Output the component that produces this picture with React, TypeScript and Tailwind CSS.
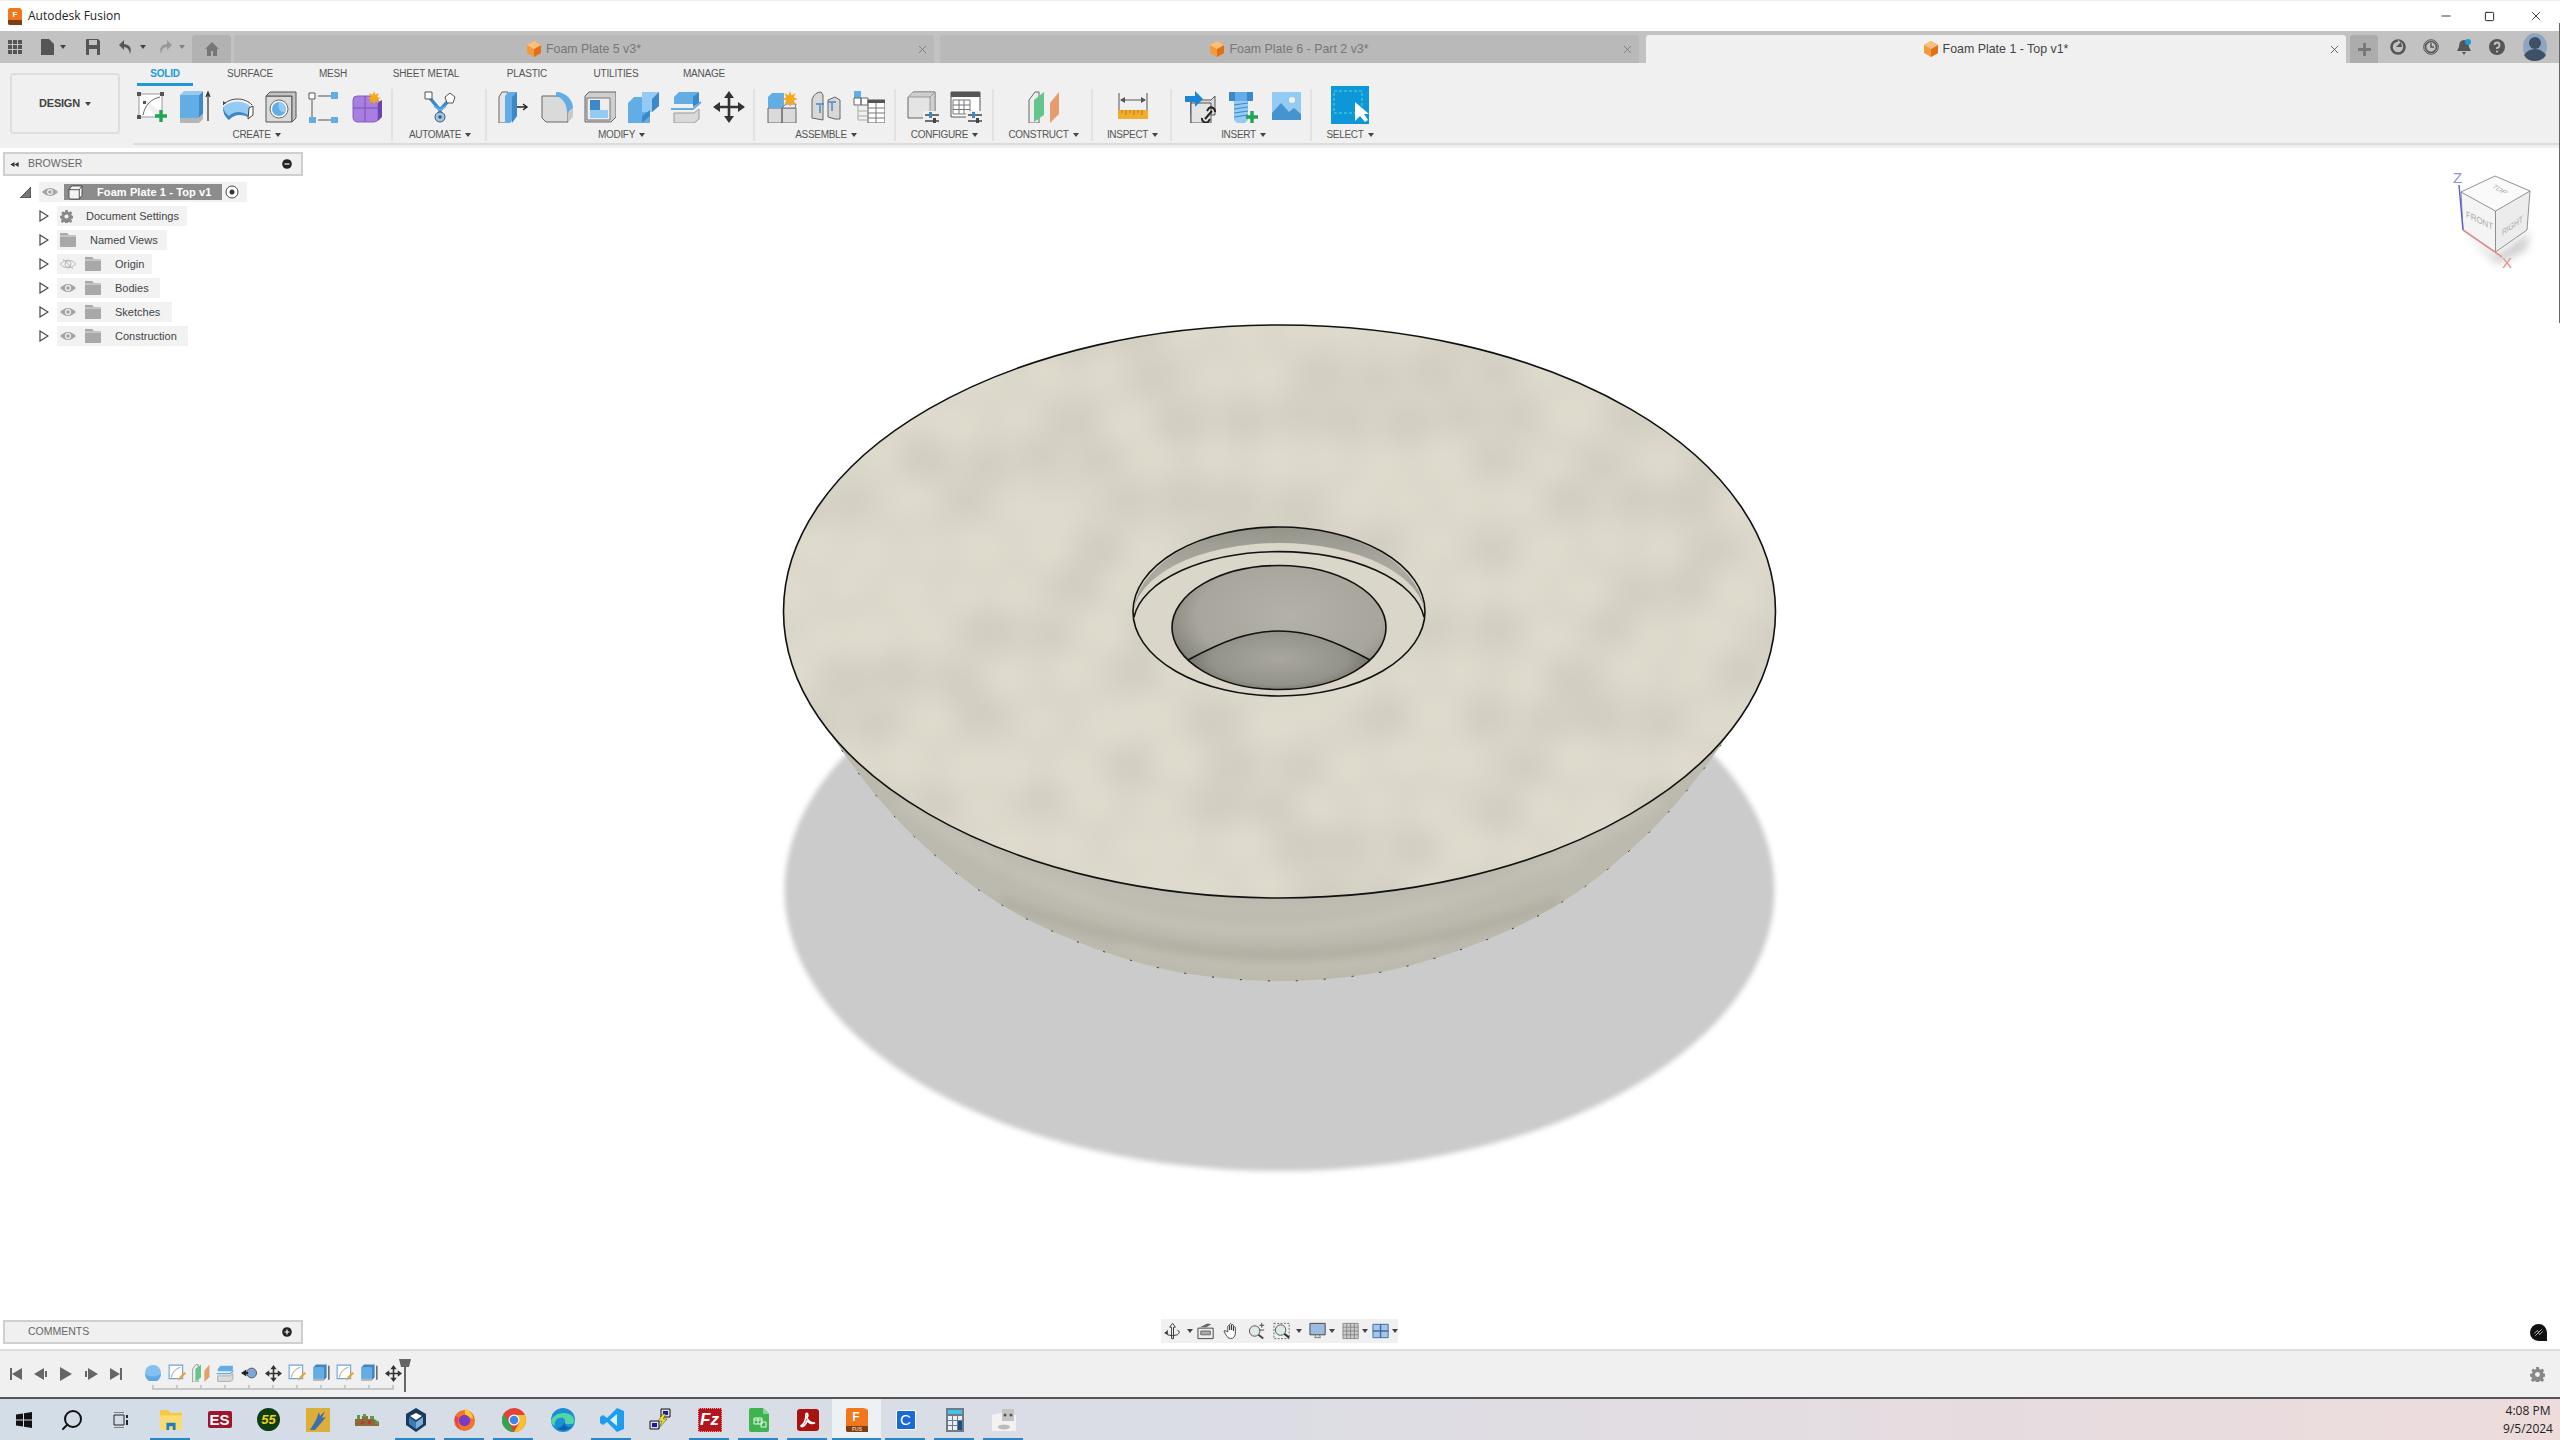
import { ReactNode } from "react";
import { Minus, Search, Square, X } from "lucide-react";

const BLUE = "#62ade6";
const BLUE_D = "#3c88c9";
const BLUE_L = "#93cbf5";
const GREY = "#dadada";
const GREY_D = "#b5b5b5";

const Ico = ({ children, className = "size-8" }: { children: ReactNode; className?: string }) => (
  <svg viewBox="0 0 32 32" className={`${className} shrink-0`}>
    {children}
  </svg>
);

const Caret = ({ className = "" }: { className?: string }) => (
  <svg viewBox="0 0 6 4" className={`w-[6px] h-[4px] shrink-0 ${className}`}>
    <path d="M0 0h6L3 4z" fill="#444" />
  </svg>
);

const Plus = ({ x, y, s = 6 }: { x: number; y: number; s?: number }) => (
  <path d={`M${x - s} ${y}h${2 * s}M${x} ${y - s}v${2 * s}`} stroke="#22a455" strokeWidth="3.4" />
);

const Star = ({ x, y, r = 7 }: { x: number; y: number; r?: number }) => {
  const pts: string[] = [];
  for (let i = 0; i < 16; i++) {
    const a = (i * Math.PI) / 8;
    const d = i % 2 ? r * 0.5 : r;
    pts.push(`${x + Math.cos(a) * d},${y + Math.sin(a) * d}`);
  }
  return <polygon points={pts.join(" ")} fill="#f5a81c" />;
};

const SketchIcon = () => (
  <Ico>
    <path d="M3 3h23v19M3 3v23h17" fill="#fff" stroke="#999" strokeWidth="1" />
    <path d="M7 24C9 14 15 8 24 6" fill="none" stroke="#666" strokeWidth="1" />
    <path d="M1 1h4v4H1zM24 1h4v4h-4zM1 24h4v4H1zM7 10h3v3H7z" fill="#555" />
    <Plus x={25} y={25} />
  </Ico>
);

const ExtrudeIcon = () => (
  <Ico>
    <path d="M1 4h19v23H1z" fill={BLUE} />
    <path d="M20 4l4-4v23l-4 4z" fill={BLUE_D} />
    <path d="M1 4l4-4h19l-4 4z" fill={BLUE_L} />
    <path d="M1 27h19l4-4v5l-4 4H1z" fill={GREY_D} />
    <path d="M29 30V2M27 6l2-5 2 5" fill="none" stroke="#333" strokeWidth="1.2" />
  </Ico>
);

const RevolveIcon = () => (
  <Ico>
    <path d="M1 14C8 6 23 6 30 14" fill="none" stroke="#444" strokeWidth="1" />
    <path d="M1 14l0-4 3 2z" fill="#444" />
    <path d="M1 16C9 9 22 9 29 16l-3 8C20 20 12 20 7 27 3 26 1 22 1 16z" fill={BLUE_L} />
    <path d="M1 16c0 7 3 11 6 13 5-6 13-6 19-3v-2C20 20 12 20 7 25 4 23 2 20 1 16z" fill={BLUE_D} />
    <path d="M27 17l4-2v9l-5 4z" fill="#fff" stroke="#444" />
  </Ico>
);

const HoleIcon = () => (
  <Ico>
    <path d="M1 5h26v26H1z" fill={GREY} stroke="#555" />
    <path d="M1 5l4-4h26v26l-4 4V5z" fill="#c4c4c4" stroke="#555" />
    <circle cx="14" cy="18" r="9" fill="#fff" stroke="#666" />
    <circle cx="14" cy="18" r="7" fill={BLUE} />
    <path d="M14 11a7 7 0 0 1 6 10c-4 1-8-3-6-10z" fill={BLUE_L} />
  </Ico>
);

const NodesIcon = () => (
  <Ico>
    <path d="M10 5h13M4 9v17M10 29h13" stroke="#555" strokeWidth="1" />
    <path d="M1 2h6v6H1z" fill="#fff" stroke="#555" />
    <path d="M23 1h7v7h-7zM1 26h7v7H1zM23 26h7v7h-7z" fill={BLUE} />
  </Ico>
);

const FormIcon = () => (
  <Ico>
    <path d="M2 9q0-4 4-4h17q4 0 4 4v18q0 4-4 4H7q-5 0-5-5z" fill="#a87fe0" stroke="#8a5cc8" />
    <path d="M2 17h25M14 5v26" stroke="#7c4fbb" />
    <path d="M27 11l4-2v17l-4 4z" fill="#6d44ad" />
    <Star x={23} y={7} />
  </Ico>
);

const AutomateIcon = () => (
  <Ico>
    <path d="M5 6l11 13 11-12M16 19v5" fill="none" stroke={BLUE_D} strokeWidth="3.4" />
    <path d="M10 15l6 4 6-4" fill="none" stroke={BLUE} strokeWidth="2" />
    <path d="M1 1h7v7H1z" fill="#fff" stroke="#555" />
    <path d="M26 2l5 4-2 6h-6l-2-6z" fill="#fff" stroke="#555" />
    <circle cx="16" cy="26" r="5" fill={BLUE_L} stroke="#555" />
    <circle cx="16" cy="26" r="1.8" fill="#555" />
  </Ico>
);

const PressPull = () => (
  <Ico>
    <path d="M1 6l3-5h6v31H1z" fill="#e6e6e6" stroke="#666" />
    <path d="M7 32V5l3-4h9v24l-7 7z" fill={BLUE} />
    <path d="M14 32V6l5-5v24z" fill={BLUE_D} />
    <path d="M19 16h9M25 13l4 3-4 3" fill="none" stroke="#222" strokeWidth="1.4" />
  </Ico>
);

const FilletIcon = () => (
  <Ico>
    <path d="M1 5h15c7 0 11 6 11 13v13H5l-4-4z" fill={GREY} stroke="#666" />
    <path d="M15 1C25 1 32 9 32 17l-6 5C26 13 22 7 15 5z" fill={BLUE} />
    <path d="M27 22l5-5v9l-5 5z" fill="#c8c8c8" />
  </Ico>
);

const ChamferIcon = () => (
  <Ico>
    <path d="M1 5l4-4h27v25l-5 5H1z" fill="#cfcfcf" stroke="#666" />
    <path d="M3 7h23v22H3z" fill="#eee" stroke="#777" />
    <path d="M6 9h10v10h8v8H6z" fill={BLUE_L} />
    <path d="M6 9h10v10H6z" fill={BLUE_D} />
  </Ico>
);

const CombineIcon = () => (
  <Ico>
    <path d="M1 12l6-6h8v13h8v13H1z" fill={BLUE} />
    <path d="M15 1h17v14l-7 6H15z" fill={BLUE_L} />
    <path d="M25 8l7-7v14l-7 6z" fill={BLUE_D} />
    <path d="M15 32l8-7v-6l-8 6z" fill={BLUE_D} />
  </Ico>
);

const OffsetIcon = () => (
  <Ico>
    <path d="M4 6l5-5h19v12H4z" fill={BLUE} />
    <path d="M23 6l6-5v11l-6 4z" fill={BLUE_D} />
    <path d="M1 18h22l8-7" fill="none" stroke={BLUE} strokeWidth="1.8" />
    <path d="M4 22h20l5-4v10l-5 4H4z" fill={GREY} stroke="#999" />
  </Ico>
);

const MoveIcon = () => (
  <Ico>
    <path d="M16 5v22M5 16h22" stroke="#333" strokeWidth="2.6" />
    <path d="M16 0l5 7H11zM16 32l-5-7h10zM0 16l7-5v10zM32 16l-7 5V11z" fill="#333" />
  </Ico>
);

const NewComp = () => (
  <Ico>
    <path d="M1 17h14v15H1zM15 17h14v15H15z" fill={GREY} stroke="#666" />
    <path d="M1 6l4-4h12v15H1z" fill={BLUE} />
    <path d="M15 17l4-4h10l-1 4z" fill="#eee" stroke="#777" />
    <Star x={23} y={8} r={8} />
  </Ico>
);

const JointIcon = () => (
  <Ico>
    <path d="M2 27V8q3-7 9-7l2 3v25z" fill="#d8d8d8" stroke="#666" />
    <path d="M30 28V9l-5-3-7 3v17l7 2z" fill="#d8d8d8" stroke="#666" />
    <path d="M10 22v-8M22 20v-8M6 13h8M18 11h8" stroke={BLUE_D} strokeWidth="1.4" />
  </Ico>
);

const BomIcon = () => (
  <Ico>
    <path d="M1 0h7v7H1z" fill={BLUE} />
    <path d="M1 7h7v7H1zM8 7h7v7H8z" fill="#fff" stroke="#666" />
    <path d="M5 14v15h9M5 20h9M5 25h9" fill="none" stroke="#aaa" />
    <path d="M15 9h17v23H15z" fill="#fff" stroke="#555" />
    <path d="M15 9h17v3H15z" fill="#555" />
    <path d="M15 17h17M15 22h17M15 27h17M23 12v20" stroke="#777" />
  </Ico>
);

const Sliders = () => (
  <g>
    <path d="M18 24h14M18 30h14" stroke="#444" strokeWidth="1.6" />
    <path d="M22 21h3v6h-3z" fill={BLUE_D} />
    <path d="M26 27h3v5h-3z" fill="#444" />
  </g>
);

const ConfigCube = () => (
  <Ico>
    <path d="M1 6l5-5h22v21l-4 5H1z" fill="#e4e4e4" stroke="#666" />
    <path d="M23 6l5-5v21l-5 5zM1 6l5-5h22l-5 5z" fill="#cfcfcf" stroke="#999" />
    <rect x="16" y="20" width="16" height="12" fill="#f0f0f0" />
    <Sliders />
  </Ico>
);

const ConfigTable = () => (
  <Ico>
    <path d="M1 1h29v25H1z" fill="#fff" stroke="#555" />
    <path d="M1 1h29v5H1z" fill="#555" />
    <path d="M3 9h17v14H3zM3 14h17M3 18.500h17M9 9v14M14 9v14" fill="none" stroke="#777" />
    <rect x="16" y="20" width="16" height="12" fill="#f0f0f0" />
    <Sliders />
  </Ico>
);

const ConstructGlyph = () => (
  <>
    <path d="M1 9l6-8h4v31H1z" fill="#eee" stroke="#666" />
    <path d="M6 31V9l10-8v23z" fill="#62c58a" />
    <path d="M22 32V12l9-11v22z" fill="#e79c6d" />
  </>
);

const ConstructIcon = () => (
  <Ico>
    <ConstructGlyph />
  </Ico>
);

const InspectIcon = () => (
  <Ico>
    <path d="M2 2v17M30 2v17M4 9h24" stroke="#555" />
    <path d="M3 9l5-3v6zM29 9l-5-3v6z" fill="#555" />
    <path d="M1 19h30v9H1z" fill="#f2ad2e" />
    <path d="M5 19v3M9 19v5M13 19v3M17 19v5M21 19v3M25 19v5" stroke="#a87314" />
  </Ico>
);

const DeriveIcon = () => (
  <Ico>
    <path d="M6 9h20l4-4v19H6z" fill="#dcdcdc" stroke="#555" />
    <path d="M6 9v23h16" fill="none" stroke="#555" />
    <path d="M6 12h20v20H6z" fill="#e4e4e4" stroke="#555" />
    <path d="M0 5h10V0l8 8-8 8v-5H0z" fill="#1b86d6" />
    <path d="M20 28l7-8M17 27a4 4 0 0 0 6 4l2-3M30 21a4 4 0 0 0-6-4l-2 3" fill="none" stroke="#222" strokeWidth="2" />
  </Ico>
);

const BoltIcon = () => (
  <Ico>
    <path d="M1 1h24v9H1z" fill={BLUE_D} />
    <path d="M7 1h12v9H7z" fill={BLUE} />
    <path d="M6 10h14v19l-3 3H9l-3-3z" fill={BLUE_L} />
    <path d="M6 14l14-2M6 18l14-2M6 22l14-2M6 26l14-2" stroke={BLUE_D} />
    <Plus x={24} y={26} />
  </Ico>
);

const ImageIcon = () => (
  <Ico>
    <rect x="1" y="1" width="29" height="28" fill={BLUE_L} />
    <circle cx="21" cy="9" r="3" fill="#f4f1dc" />
    <path d="M1 22l9-10 8 9 5-4 7 6v6H1z" fill="#4593cf" />
  </Ico>
);

const SelectIcon = () => (
  <svg viewBox="0 0 38 38" className="w-[38px] h-[38px] shrink-0">
    <rect width="38" height="38" fill="#0d96d8" />
    <rect x="3" y="5" width="28" height="22" fill="none" stroke="#4fe0c8" strokeDasharray="3 2" />
    <path d="M24 16v19l5-5 5 6 3-2-4-6h5z" fill="#fff" />
  </svg>
);

const Group = ({ w, label, children, labelClass = "" }: { w: string; label: string; children: ReactNode; labelClass?: string }) => (
  <div className={`${w} relative flex flex-col items-center border-r-2 border-[#e2e2e2] h-[52px]`}>
    <div className="flex items-center gap-[11px] h-[34px] pt-[1px]">{children}</div>
    <div className={`flex items-center gap-[4px] mt-[6px] text-[10px] leading-3 tracking-[-0.3px] text-[#555] ${labelClass}`}>
      {label}
      <Caret />
    </div>
  </div>
);

const TabLabel = ({ w, children, active }: { w: string; children: string; active?: boolean }) => (
  <div
    className={`${w} h-[23px] pt-[5px] text-center text-[10px] leading-3 tracking-[-0.2px] ${
      active ? "text-[#1c9ad6] font-bold border-b-[3px] border-[#1c9ad6]" : "text-[#555]"
    }`}
  >
    {children}
  </div>
);

const TabCube = () => (
  <svg viewBox="0 0 14 16" className="w-[14px] h-[16px] shrink-0">
    <path d="M7 0l7 4v8l-7 4-7-4V4z" fill="#f39a3c" />
    <path d="M7 8l7-4v8l-7 4z" fill="#e0701a" />
    <path d="M7 0l7 4-7 4-7-4z" fill="#fbc07c" />
  </svg>
);

const DocTab = ({ w, text, active }: { w: string; text: string; active?: boolean }) => (
  <div
    className={`${w} relative h-[28px] rounded-t-[3px] flex items-center justify-center gap-[5px] text-[12.4px] leading-4 ${
      active ? "bg-[#f0f0f0] text-[#444]" : "bg-[#b9b9b9] text-[#777]"
    }`}
  >
    <TabCube />
    {text}
    <X className={`absolute right-[5px] top-[8px] size-[13px] ${active ? "text-[#555]" : "text-[#777]"}`} strokeWidth={1.6} />
  </div>
);

const Eye = ({ off }: { off?: boolean }) => (
  <svg viewBox="0 0 16 10" className="w-[16px] h-[10px] shrink-0">
    <path d="M0 5q8-8 16 0-8 8-16 0z" fill={off ? "none" : "#a5a5a5"} stroke={off ? "#bbb" : "none"} />
    <circle cx="8" cy="5" r="3" fill={off ? "none" : "#f2f2f2"} stroke={off ? "#bbb" : "none"} />
    {!off && <circle cx="8" cy="5" r="1.8" fill="#a5a5a5" />}
    {off && <path d="M3 0l10 10" stroke="#bbb" />}
  </svg>
);

const Folder = () => (
  <svg viewBox="0 0 16 14" className="w-[16px] h-[14px] shrink-0">
    <path d="M0 0h7l2 2h7v12H0z" fill="#a8a8a8" />
    <path d="M0 3h16" stroke="#e0e0e0" />
  </svg>
);

const Gear = ({ className, fill = "#888" }: { className: string; fill?: string }) => (
  <svg viewBox="0 0 16 16" className={`${className} shrink-0`}>
    <path
      d="M6.500 0h3l.4 2.200 1.300.6L13 1.500l2.100 2.100-1.300 1.900.6 1.300 2.200.4v3l-2.200.4-.6 1.300 1.300 1.900-2.100 2.100-1.800-1.300-1.300.6-.4 2.200h-3l-.4-2.200-1.300-.6L3 15.900.9 13.800l1.300-1.900-.6-1.300L0 10.200v-3l2.200-.4.6-1.300L1.500 3.600 3.600 1.500l1.600 1.300 1.300-.6z"
      fill={fill}
    />
    <circle cx="8" cy="8" r="2.600" fill="#f0f0f0" />
  </svg>
);

const Expand = () => (
  <svg viewBox="0 0 10 12" className="w-[10px] h-[12px] shrink-0">
    <path d="M1 1l8 5-8 5z" fill="#fff" stroke="#444" strokeWidth="1.2" />
  </svg>
);

const TreeRow = ({ w, children }: { w: string; children: ReactNode }) => (
  <div className="flex items-center h-[24px] pl-[39px]">
    <Expand />
    <div className={`${w} ml-[8px] h-[20px] bg-[#f2f2f2] flex items-center pl-[3px] text-[11px] leading-3 text-[#444]`}>
      {children}
    </div>
  </div>
);

const PanelHead = ({ title, plus, back }: { title: string; plus?: boolean; back?: boolean }) => (
  <div className="ml-[3px] w-[300px] h-[24px] bg-[#f0f0f0] border-2 border-[#cfcfcf] flex items-center text-[10.5px] text-[#666] relative pl-[23px]">
    {back && (
      <svg viewBox="0 0 10 6" className="absolute left-[5px] top-[8px] w-[9px] h-[5px]">
        <path d="M5 0v6L0 3zM10 0v6L5 3z" fill="#333" />
      </svg>
    )}
    {title}
    <svg viewBox="0 0 10 10" className="absolute right-[9px] top-[5px] size-[10px]">
      <circle cx="5" cy="5" r="4.800" fill="#222" />
      <path d={plus ? "M2.500 5h5M5 2.500v5" : "M2.500 5h5"} stroke="#fff" strokeWidth="1.2" />
    </svg>
  </div>
);

// seeded blobs for the foam texture
const rand = (i: number) => {
  const v = Math.sin(i * 91.17 + 3.3) * 43758.5453;
  return v - Math.floor(v);
};

const blobs: { x: number; y: number; r: number; light: boolean }[] = [];
for (let row = 0; row < 14; row++) {
  for (let col = 0; col < 19; col++) {
    const i = row * 19 + col;
    blobs.push({
      x: 784 + col * 56 + (row % 2) * 28 + rand(i) * 16,
      y: 325 + row * 43 + rand(i + 500) * 14,
      r: 19 + rand(i + 900) * 9,
      light: rand(i + 1300) > 0.35,
    });
  }
}

const BOWL =
  "M826 727Q880 810 937 857Q985 900 1043 927Q1110 958 1177 972Q1230 981 1279.500 981Q1329 981 1382 972Q1449 958 1516 927Q1574 900 1622 857Q1679 810 1733 727";

const Model = () => (
  <svg viewBox="0 148 2560 1201" className="absolute inset-0 w-full h-full">
    <defs>
      <filter id="soft" x="-5%" y="-5%" width="110%" height="110%">
        <feGaussianBlur stdDeviation="2.500" />
      </filter>
      <filter id="mottle" x="-5%" y="-5%" width="110%" height="110%">
        <feGaussianBlur stdDeviation="11" />
      </filter>
      <filter id="band" x="-5%" y="-20%" width="110%" height="140%">
        <feGaussianBlur stdDeviation="5" />
      </filter>
      <clipPath id="topFace">
        <ellipse cx="1279.500" cy="611.500" rx="496" ry="286.500" />
      </clipPath>
      <clipPath id="bowl">
        <path d={`${BOWL}Z`} />
      </clipPath>
      <linearGradient id="wall" x1="0" x2="0" y1="0" y2="1">
        <stop offset="0" stopColor="#96958c" />
        <stop offset="0.5" stopColor="#adaba1" />
        <stop offset="1" stopColor="#9a998f" />
      </linearGradient>
      <radialGradient id="bore" cx="0.55" cy="0.4" r="0.62">
        <stop offset="0" stopColor="#b4b2a8" />
        <stop offset="0.7" stopColor="#a8a69c" />
        <stop offset="1" stopColor="#7e7d75" />
      </radialGradient>
      <radialGradient id="pit" cx="0.5" cy="0.4" r="0.62">
        <stop offset="0" stopColor="#a9a79d" />
        <stop offset="0.6" stopColor="#94938a" />
        <stop offset="1" stopColor="#5a5954" />
      </radialGradient>
      <clipPath id="boreClip">
        <ellipse cx="1279" cy="627.500" rx="107" ry="62" />
      </clipPath>
    </defs>

    <ellipse cx="1279.500" cy="890" rx="495" ry="281" fill="#cbcbcb" filter="url(#soft)" />

    <path d={`${BOWL}Z`} fill="#bcbaae" />
    <g clipPath="url(#bowl)" filter="url(#band)">
      <path d="M900 800Q1250 1060 1660 800" fill="none" stroke="#c3c1b5" strokeWidth="12" />
      <path d="M1000 900Q1280 1010 1560 900" fill="none" stroke="#b1afa3" strokeWidth="12" />
      <path d="M1120 945Q1280 990 1440 945" fill="none" stroke="#c2c0b4" strokeWidth="7" />
      <path d="M1000 860Q1270 960 1580 860" fill="none" stroke="#c0beb2" strokeWidth="10" />
    </g>
    <path d={BOWL} fill="none" stroke="#333" strokeWidth="1" strokeDasharray="2 26" />

    <ellipse cx="1279.500" cy="611.500" rx="496" ry="286.500" fill="#d9d5c8" />
    <g clipPath="url(#topFace)">
      <g filter="url(#mottle)">
        {blobs.map((b, i) => (
          <ellipse key={i} cx={b.x} cy={b.y} rx={b.r} ry={b.r * 0.8} fill={b.light ? "#dfdbce" : "#d2cec1"} />
        ))}
      </g>
    </g>
    <ellipse cx="1279.500" cy="611.500" rx="496" ry="286.500" fill="none" stroke="#111" strokeWidth="1.6" />

    {/* counterbore */}
    <ellipse cx="1279" cy="611.500" rx="146" ry="84.500" fill="#dad6ca" />
    <path d="M1133 617A146 90 0 0 1 1425 617A146 74 0 0 0 1133 617Z" fill="url(#wall)" />
    <ellipse cx="1279" cy="611.500" rx="146" ry="84.500" fill="none" stroke="#111" strokeWidth="1.6" />
    <path d="M1134 617A146 74 0 0 1 1424 617" fill="none" stroke="#111" strokeWidth="1.6" />

    {/* through hole */}
    <ellipse cx="1279" cy="627.500" rx="107" ry="62" fill="url(#bore)" />
    <g clipPath="url(#boreClip)">
      <path d="M1188 660C1225 640 1250 631 1279 631C1308 631 1333 640 1370 660L1370 700L1188 700Z" fill="url(#pit)" stroke="#111" strokeWidth="1.6" />
    </g>
    <ellipse cx="1279" cy="627.500" rx="107" ry="62" fill="none" stroke="#111" strokeWidth="1.6" />
  </svg>
);

const NavCube = () => (
  <svg viewBox="2440 160 110 120" className="absolute right-[10px] top-[12px] w-[110px] h-[120px]">
    <defs>
      <filter id="cubeShadow" x="-30%" y="-30%" width="160%" height="160%">
        <feGaussianBlur stdDeviation="4" />
      </filter>
    </defs>
    <path d="M2464 232L2496 256L2530 232L2526 250L2497 264Z" fill="#999" opacity="0.5" filter="url(#cubeShadow)" />
    <path d="M2495 176L2530 191L2527 230L2495.500 252L2463 230L2461 192Z" fill="#f4f4f4" />
    <path d="M2495 176L2530 191L2495.500 211L2461 192Z" fill="#fafafa" />
    <path d="M2495.500 211L2530 191L2527 230L2495.500 252Z" fill="#ececec" />
    <path
      d="M2495 176L2530 191L2527 230L2495.500 252L2463 230L2461 192ZM2461 192L2495.500 211L2530 191M2495.500 211V252"
      fill="none"
      stroke="#777"
      strokeWidth="0.8"
    />
    <path d="M2463 230L2459 185" stroke="#5a5ae0" strokeWidth="1.4" />
    <path d="M2463 230L2502 257" stroke="#e09090" strokeWidth="1.6" />
    <text x="2453" y="183" fontSize="15" fill="#8f8fe8" fontFamily="Liberation Sans, sans-serif">Z</text>
    <text x="2502" y="268" fontSize="15" fill="#e88e8e" fontFamily="Liberation Sans, sans-serif">X</text>
    <g fontFamily="Liberation Sans, sans-serif" fontSize="9" fill="#a8a8a8">
      <text transform="matrix(0.87 0.42 0 1 2466 217)">FRONT</text>
      <text transform="matrix(0.75 -0.52 0 1 2502 236)">RIGHT</text>
      <text transform="matrix(0.72 0.4 -0.72 0.4 2491 187)">TOP</text>
    </g>
  </svg>
);

const NavBar = () => (
  <div className="absolute left-[1161px] bottom-[6px] w-[237px] h-[24px] bg-[#f0f0f0] flex items-center pl-[3px]">
    <svg viewBox="0 0 18 18" className="size-[18px]">
      <path d="M9 1l3 4h-2v12H8V5H6z" fill="#fff" stroke="#333" />
      <path d="M4 8q-4 3 0 5t10 0q4-3 0-5" fill="none" stroke="#333" />
      <path d="M0 11l4-2v4z" fill="#333" />
    </svg>
    <Caret className="ml-[6px]" />
    <svg viewBox="0 0 18 18" className="size-[18px] ml-[4px]">
      <path d="M1 6h16v11H1z" fill="#eee" stroke="#444" />
      <path d="M4 9h10v4H4z" fill="#aaa" stroke="#666" />
      <path d="M3 5l8-4 4 1-5 3z" fill="#666" />
    </svg>
    <svg viewBox="0 0 18 18" className="size-[18px] ml-[9px]">
      <path d="M5 10V4q1-2 2 0v4V2q1-2 2 0v6V3q1-2 2 0v6V5q1-1 2 0v7q-1 5-5 5-3 0-5-4L1 9q1-1 2 0z" fill="#fff" stroke="#333" strokeWidth="0.9" />
    </svg>
    <svg viewBox="0 0 18 18" className="size-[18px] ml-[8px]">
      <circle cx="7" cy="9" r="5.500" fill="#dcebe6" stroke="#555" />
      <path d="M11 13l5 4" stroke="#444" strokeWidth="2" />
      <path d="M12 3h5M14.500 .5v5M12 8h5" stroke="#444" />
    </svg>
    <svg viewBox="0 0 18 18" className="size-[18px] ml-[7px]">
      <path d="M1 1h16v16H1z" fill="none" stroke="#666" strokeDasharray="2 1.500" />
      <circle cx="8" cy="8" r="5.500" fill="#dcebe6" stroke="#555" />
      <path d="M12 12l5 4" stroke="#333" strokeWidth="2.200" />
    </svg>
    <Caret className="ml-[6px]" />
    <svg viewBox="0 0 18 18" className="size-[18px] ml-[7px]">
      <path d="M1 1h16v12H1z" fill="#9dbde0" stroke="#444" />
      <path d="M7 13h4l1 3H6z" fill="#ddd" stroke="#555" strokeWidth="0.7" />
    </svg>
    <Caret className="ml-[3px]" />
    <svg viewBox="0 0 18 18" className="size-[18px] ml-[7px]">
      <path d="M1 1h16v16H1zM1 5h16M1 9h16M1 13h16M5 1v16M9 1v16M13 1v16" fill="#ccc" stroke="#777" strokeWidth="0.8" />
    </svg>
    <Caret className="ml-[3px]" />
    <svg viewBox="0 0 18 18" className="size-[18px] ml-[4px]">
      <path d="M1 2h16v14H1z" fill="#a9c6e6" stroke="#3a6ea8" />
      <path d="M1 9h16M9 2v14" stroke="#3a6ea8" strokeWidth="1.500" />
    </svg>
    <Caret className="ml-[3px]" />
  </div>
);

const TlSketch = () => (
  <Ico className="size-[18px]">
    <path d="M2 2h24v24H2z" fill="#fff" stroke="#6ea4d6" strokeWidth="2" />
    <path d="M6 24C8 14 14 8 22 6" fill="none" stroke="#888" strokeWidth="1.500" />
    <path d="M18 30l3-8 8-8 3 3-8 8z" fill="#f0a030" />
  </Ico>
);

const TlSmall = ({ children }: { children: ReactNode }) => (
  <div className="w-[24px] flex flex-col items-center relative h-[30px]">
    <div className="h-[20px] flex items-center justify-center">{children}</div>
    <div className="w-[2px] h-[5px] bg-[#c8c8c8] mt-[2px]" />
  </div>
);

const tlExtrude = (
  <Ico className="size-[18px]">
    <path d="M2 6h19v23H2z" fill={BLUE} />
    <path d="M21 6l5-5v23l-5 5zM2 6l5-5h19l-5 5z" fill={BLUE_D} />
    <path d="M2 26h19v4H2z" fill={GREY_D} />
    <path d="M30 28V3" stroke="#333" strokeWidth="2" />
  </Ico>
);

const tlMove = (
  <Ico className="size-[17px]">
    <path d="M16 5v22M5 16h22" stroke="#333" strokeWidth="3" />
    <path d="M16 0l6 8H10zM16 32l-6-8h12zM0 16l8-6v12zM32 16l-8 6V10z" fill="#333" />
  </Ico>
);

const Timeline = () => (
  <div className="h-[50px] bg-[#f0f0f0] border-t-2 border-[#dedede] border-b-2 border-b-[#555] flex items-center shrink-0">
    <div className="flex items-center w-[141px] pl-[10px] gap-[12px] text-[#666]">
      <svg viewBox="0 0 12 12" className="size-[12px]"><path d="M0 0h2v12H0zM12 0v12L2 6z" fill="#666" /></svg>
      <svg viewBox="0 0 14 12" className="w-[14px] h-[12px]"><path d="M10 0v12L0 6zM11 3h2v6h-2z" fill="#666" /></svg>
      <svg viewBox="0 0 12 14" className="w-[12px] h-[14px]"><path d="M0 0l12 7-12 7z" fill="#666" /></svg>
      <svg viewBox="0 0 14 12" className="w-[14px] h-[12px]"><path d="M4 0v12l10-6zM1 3h2v6H1z" fill="#666" /></svg>
      <svg viewBox="0 0 12 12" className="size-[12px]"><path d="M10 0h2v12h-2zM0 0v12l10-6z" fill="#666" /></svg>
    </div>
    <div className="relative flex pt-[12px] h-[46px]">
      <div className="absolute left-[11px] top-[37px] w-[242px] h-[2px] bg-[#c8c8c8]" />
      <TlSmall>
        <svg viewBox="0 0 16 16" className="size-4"><circle cx="8" cy="8" r="8" fill="#85c0f0" /><path d="M0 9a8 8 0 0 0 16 0q-8 5-16 0z" fill="#62a8e0" /></svg>
      </TlSmall>
      <TlSmall><TlSketch /></TlSmall>
      <TlSmall><Ico className="size-[18px]"><ConstructGlyph /></Ico></TlSmall>
      <TlSmall>
        <Ico className="size-[18px]">
          <path d="M3 9l5-6h22v10H3z" fill={BLUE} />
          <path d="M1 17h24l6-5" fill="none" stroke={BLUE} strokeWidth="2" />
          <path d="M3 21h22l5-4v11l-5 3H3z" fill={GREY} stroke="#888" />
        </Ico>
      </TlSmall>
      <TlSmall>
        <svg viewBox="0 0 18 12" className="w-[16px] h-[12px]"><circle cx="12" cy="6" r="5.500" fill="#7fa6d8" stroke="#555" /><path d="M0 6l6-4v8z M5 5h3v2H5z" fill="#222" /></svg>
      </TlSmall>
      <TlSmall>{tlMove}</TlSmall>
      <TlSmall><TlSketch /></TlSmall>
      <TlSmall>{tlExtrude}</TlSmall>
      <TlSmall><TlSketch /></TlSmall>
      <TlSmall>{tlExtrude}</TlSmall>
      <TlSmall>{tlMove}</TlSmall>
      <div className="w-[24px] -ml-[12px] -mt-[4px] flex justify-center">
        <svg viewBox="0 0 12 33" className="w-[12px] h-[33px]"><path d="M0 0h12l-2 8H7v25H5V8H2z" fill="#666" /></svg>
      </div>
    </div>
    <div className="ml-auto pr-[15px]">
      <Gear className="size-[15px]" />
    </div>
  </div>
);

const TaskIcon = ({ children, w = "w-[49px]", on, soft }: { children: ReactNode; w?: string; on?: boolean; soft?: boolean }) => (
  <div className={`${w} h-[41px] relative flex items-center justify-center shrink-0 ${soft ? "bg-[#eef1f4]" : ""}`}>
    {children}
    {on && <div className={`absolute bottom-0 h-[2px] bg-[#2d86c4] ${soft ? "left-0 right-0" : "left-[4px] right-[5px]"}`} />}
  </div>
);

const appText = "Liberation Sans, sans-serif";

const Taskbar = () => (
  <div className="h-[41px] shrink-0 flex bg-gradient-to-r from-[#d2dde8] via-[#dcdde4] to-[#eedcdc]">
    <TaskIcon w="w-[48px]">
      <svg viewBox="0 0 16 16" className="size-[16px]"><path d="M0 2.500l7-1v6H0zM8 1.300L16 0v7.500H8zM0 8.500h7v6l-7-1zM8 8.500h8V16l-8-1.200z" fill="#111" /></svg>
    </TaskIcon>
    <TaskIcon w="w-[48px]">
      <Search className="size-[24px] -scale-x-100 text-[#111]" strokeWidth={2} />
    </TaskIcon>
    <TaskIcon w="w-[50px]">
      <svg viewBox="0 0 16 16" className="size-[16px]"><path d="M1 0h10M1 16h10M1 3h10v10H1z" fill="none" stroke="#222" /><path d="M13 3h2v3h-2zM13 8h2v5h-2z" fill="#222" /></svg>
    </TaskIcon>
    <TaskIcon on>
      <svg viewBox="0 0 24 22" className="w-[22px] h-[20px]"><path d="M0 0h9l2 3h13v19H0z" fill="#f6c945" /><path d="M0 6h24v16H0z" fill="#fbdc74" /><path d="M7 22v-8h10v8h-3v-4h-4v4z" fill="#1d7fc2" /></svg>
    </TaskIcon>
    <TaskIcon>
      <div className="w-[24px] h-[17px] rounded-[2px] bg-[#a0132a] text-white text-[15px] leading-[17px] font-bold text-center font-['Liberation_Sans',sans-serif]">ES</div>
    </TaskIcon>
    <TaskIcon>
      <div className="size-[23px] rounded-full bg-[#0f3d12] text-[#f3d21e] text-[13px] leading-[23px] italic font-bold text-center font-['Liberation_Sans',sans-serif]">55</div>
    </TaskIcon>
    <TaskIcon>
      <svg viewBox="0 0 24 24" className="size-[24px]"><rect width="24" height="24" fill="#dcae3a" /><path d="M4 22l6-10 3-8 1 4 5-5-3 7 4-1-5 6-6 7z" fill="#3d6fb0" /></svg>
    </TaskIcon>
    <TaskIcon>
      <svg viewBox="0 0 24 12" className="w-[24px] h-[12px]"><path d="M0 5h7V2h6v3h6l5 3v4H0z" fill="#8c6a3a" /><path d="M2 1h3v4H2zM8 0h3v3H8zM15 2h4v3h-4zM20 7h3v3h-3z" fill="#55a047" /><path d="M6 7h3v3H6zM13 6h3v4h-3z" fill="#c0392b" /></svg>
    </TaskIcon>
    <TaskIcon on>
      <svg viewBox="0 0 20 24" className="w-[20px] h-[24px]"><path d="M10 0l10 6v11l-10 7L0 17V6z" fill="#1a3a5c" /><path d="M10 5l6 3-6 4-6-4z" fill="#fff" /><path d="M10 14v7l7-5v-7z" fill="#7aaedc" /><path d="M10 14v7l-7-5v-7z" fill="#3d7ab8" /></svg>
    </TaskIcon>
    <TaskIcon on>
      <svg viewBox="0 0 24 24" className="size-[23px]"><circle cx="12" cy="13" r="11" fill="#f2762a" /><path d="M12 0q8 4 9 11L13 9z" fill="#ffc732" /><circle cx="12" cy="13" r="6" fill="#7d3cc0" /><path d="M2 8q-1 10 6 14-5-6-2-12z" fill="#e23e5a" /></svg>
    </TaskIcon>
    <TaskIcon on>
      <svg viewBox="0 0 24 24" className="size-[24px]"><circle cx="12" cy="12" r="12" fill="#e24336" /><path d="M12 24A12 12 0 0 1 1.600 6L7 15l5 9z" fill="#2ea84f" /><path d="M24 12a12 12 0 0 1-12 12l5.500-9.500L12 7h10.900q1.100 2.400 1.100 5z" fill="#fbc02d" /><circle cx="12" cy="12" r="5.500" fill="#fff" /><circle cx="12" cy="12" r="4.300" fill="#3d85e8" /></svg>
    </TaskIcon>
    <TaskIcon>
      <svg viewBox="0 0 24 24" className="size-[24px]"><circle cx="12" cy="12" r="12" fill="#1b8fd6" /><path d="M0 13C2 6 14 2 21 8c3 3 3 7 0 8-4 0-7 1-7-2 1-3-2-5-6-4-3 1-5 4-4 8-2-1-4-3-4-5z" fill="#52d6a6" /><path d="M14 14c-1 4 3 7 7 4-4 5-11 6-15 2 2 0 6-1 8-6z" fill="#0d63ad" /></svg>
    </TaskIcon>
    <TaskIcon on>
      <svg viewBox="0 0 24 24" className="size-[24px]"><path d="M17 0l7 3v18l-7 3L7 14l-4 3-3-2v-6l3-2 4 3z" fill="#1f9cf0" /><path d="M17 6v12l-7-6z" fill="#fff" opacity="0.85" /></svg>
    </TaskIcon>
    <TaskIcon>
      <svg viewBox="0 0 24 24" className="size-[24px]"><path d="M12 1h9v8h-9zM1 13h9v8H1z" fill="#ddd" stroke="#111" /><path d="M14 3h5v4h-5zM3 15h5v4H3z" fill="#1a1a9c" /><path d="M14 6l-5 7h4l-3 7 8-9h-4l3-5z" fill="#f4e21c" stroke="#333" strokeWidth="0.5" /></svg>
    </TaskIcon>
    <TaskIcon on>
      <div className="size-[24px] bg-[#b3151d] text-white text-[17px] leading-[22px] italic font-bold text-center border border-dotted border-[#e6a0a0] font-['Liberation_Sans',sans-serif]">Fz</div>
    </TaskIcon>
    <TaskIcon on>
      <svg viewBox="0 0 20 24" className="w-[20px] h-[24px]"><path d="M2 0h12l6 6v16q0 2-2 2H2q-2 0-2-2V2q0-2 2-2z" fill="#3fb34f" /><path d="M14 0l6 6h-6z" fill="#8ad694" /><path d="M5 10h8v6H5zM5 12h8M9 10v6M12 14h5v5h-5z" fill="none" stroke="#e8f8ea" /></svg>
    </TaskIcon>
    <TaskIcon on>
      <svg viewBox="0 0 22 22" className="size-[22px]"><rect width="22" height="22" rx="3" fill="#a9120f" /><path d="M4 17c3-2 5-7 5-12 1-2 3 0 1 4 2 4 4 5 8 5-3 1-6 0-8-2-1 3-4 7-6 5z" fill="none" stroke="#fff" strokeWidth="1.600" /></svg>
    </TaskIcon>
    <TaskIcon on soft>
      <svg viewBox="0 0 22 24" className="w-[22px] h-[24px]">
        <path d="M2 0h16l4 2v22H2q-2 0-2-2V2q0-2 2-2z" fill="#f2761c" />
        <path d="M0 18h22v6H2q-2 0-2-2z" fill="#7c3e12" />
        <text x="10" y="13" fontSize="12" fontWeight="700" fill="#fff" textAnchor="middle" fontFamily={appText}>F</text>
        <text x="11" y="23" fontSize="5" fontWeight="700" fill="#f0d0b0" textAnchor="middle" fontFamily={appText}>FUS</text>
      </svg>
    </TaskIcon>
    <TaskIcon on>
      <div className="size-[20px] rounded-[2px] bg-[#1b68d8] border border-white text-white text-[15px] leading-[18px] text-center font-['Liberation_Sans',sans-serif]">C</div>
    </TaskIcon>
    <TaskIcon on>
      <svg viewBox="0 0 18 24" className="w-[18px] h-[24px]"><rect width="18" height="24" fill="#6f7c88" /><path d="M2 2h14v4H2z" fill="#40c4e8" /><path d="M2 8h4v4H2zM7 8h4v4H7zM2 13h4v4H2zM7 13h4v4H7zM2 18h4v4H2zM7 18h4v4H7zM12 8h4v4h-4z" fill="#e8eef2" /><path d="M12 13h4v9h-4z" fill="#1c4e88" /></svg>
    </TaskIcon>
    <TaskIcon on>
      <svg viewBox="0 0 24 22" className="w-[24px] h-[22px]"><path d="M0 6l12-3 12 3v16H0z" fill="#f2f2f2" /><path d="M10 0h12v12H10z" fill="#c4c4c4" /><circle cx="13" cy="6" r="1.500" fill="#555" /><circle cx="19" cy="6" r="1.500" fill="#555" /><ellipse cx="12" cy="18" rx="6" ry="2.500" fill="#bbb" /></svg>
    </TaskIcon>
    <div className="ml-auto w-[64px] flex flex-col items-center text-[12px] leading-[18px] text-[#222] font-['Open_Sans',sans-serif] pt-[3px]">
      <span>4:08 PM</span>
      <span>9/5/2024</span>
    </div>
  </div>
);

export default function App() {
  return (
    <div className="relative w-[2560px] h-[1440px] flex flex-col overflow-hidden bg-white font-['Liberation_Sans',Arial,sans-serif]">
      {/* window title */}
      <div className="h-[31px] shrink-0 flex items-center border-t border-[#eee] bg-white relative">
        <svg viewBox="0 0 14 17" className="ml-[8px] w-[14px] h-[17px]">
          <path d="M2 0h10l2 2v15H2q-2 0-2-2V2q0-2 2-2z" fill="#f2761c" />
          <path d="M0 12h14v5H2q-2 0-2-2z" fill="#7c3e12" />
          <text x="7" y="9" fontSize="8" fontWeight="700" fill="#fff" textAnchor="middle" fontFamily={appText}>F</text>
        </svg>
        <span className="ml-[6px] text-[12px] text-[#222] font-['Open_Sans',sans-serif]">Autodesk Fusion</span>
        <div className="ml-auto flex items-center text-[#111]">
          <Minus className="size-[14px] mr-[31px]" strokeWidth={1.4} />
          <Square className="size-[11px] mr-[34px]" strokeWidth={2} />
          <X className="size-[14px] mr-[17px]" strokeWidth={1.4} />
        </div>
      </div>

      {/* tab strip */}
      <div className="h-[32px] shrink-0 bg-[#c2c2c2] flex items-end">
        <div className="w-[192px] h-[32px] flex items-center shrink-0">
          <svg viewBox="0 0 14 14" className="ml-[8px] size-[14px]">
            <path d="M0 0h4v4H0zM5 0h4v4H5zM10 0h4v4h-4zM0 5h4v4H0zM5 5h4v4H5zM10 5h4v4h-4zM0 10h4v4H0zM5 10h4v4H5zM10 10h4v4h-4z" fill="#555" />
          </svg>
          <svg viewBox="0 0 13 16" className="ml-[19px] w-[13px] h-[16px]"><path d="M0 0h8l5 5v11H0z" fill="#555" /></svg>
          <Caret className="ml-[6px]" />
          <svg viewBox="0 0 14 16" className="ml-[20px] w-[14px] h-[16px]">
            <path d="M0 1q0-1 1-1h11l2 2v13q0 1-1 1H1q-1 0-1-1z" fill="#555" />
            <path d="M3 1h8v5H3zM3 10h8v6H3z" fill="#c2c2c2" />
          </svg>
          <svg viewBox="0 0 14 14" className="ml-[19px] size-[14px]"><path d="M5 0L0 5l5 5V7q5 0 6 7 3-9-6-10z" fill="#555" /></svg>
          <Caret className="ml-[7px]" />
          <svg viewBox="0 0 14 14" className="ml-[12px] size-[14px]"><path d="M9 0l5 5-5 5V7q-5 0-6 7-3-9 6-10z" fill="#999" /></svg>
          <Caret className="ml-[7px] opacity-50" />
        </div>
        <div className="w-[39px] h-[28px] bg-[#b2b2b2] rounded-t-[3px] flex items-center justify-center mr-[3px] shrink-0">
          <svg viewBox="0 0 14 14" className="size-[14px]"><path d="M7 0l7 7h-2v7H8V9H6v5H2V7H0z" fill="#777" /></svg>
        </div>
        <DocTab w="w-[700px] mr-[6px]" text="Foam Plate 5 v3*" />
        <DocTab w="w-[699px] mr-[7px]" text="Foam Plate 6 - Part 2 v3*" />
        <DocTab w="w-[700px] mr-[4px]" text="Foam Plate 1 - Top v1*" active />
        <div className="w-[28px] h-[28px] bg-[#acacac] rounded-t-[3px] flex items-center justify-center shrink-0">
          <svg viewBox="0 0 14 14" className="size-[13px]"><path d="M7 0v14M0 7h14" stroke="#777" strokeWidth="3" /></svg>
        </div>
        <div className="flex items-center h-[32px] pb-[1px]">
          <svg viewBox="0 0 16 16" className="ml-[12px] size-[16px]">
            <circle cx="8" cy="8" r="6.500" fill="none" stroke="#555" strokeWidth="2.600" />
            <path d="M8 1l5 4-6 3z" fill="#c2c2c2" />
            <path d="M6 8l5-5 1 5z" fill="#555" />
          </svg>
          <svg viewBox="0 0 16 16" className="ml-[17px] size-[16px]">
            <circle cx="8" cy="8" r="7.300" fill="none" stroke="#555" />
            <circle cx="8" cy="8" r="5.500" fill="none" stroke="#555" strokeWidth="1.600" />
            <path d="M8 4v4h3" fill="none" stroke="#555" strokeWidth="1.400" />
          </svg>
          <svg viewBox="0 0 16 18" className="ml-[17px] w-[16px] h-[18px]">
            <path d="M8 2q5 0 5 7l2 4H1l2-4q0-7 5-7zM6 14h4l-2 3z" fill="#555" />
            <circle cx="12" cy="4" r="3" fill="#1c9ad6" />
          </svg>
          <svg viewBox="0 0 16 16" className="ml-[17px] size-[16px]">
            <circle cx="8" cy="8" r="8" fill="#555" />
            <path d="M5.500 6q0-2.500 2.500-2.500T10.500 6 8 9v1" fill="none" stroke="#c2c2c2" strokeWidth="1.800" />
            <circle cx="8" cy="12.500" r="1.100" fill="#c2c2c2" />
          </svg>
          <svg viewBox="0 0 24 28" className="ml-[18px] w-[24px] h-[28px]">
            <ellipse cx="12" cy="14" rx="12" ry="14" fill="#8fa5bf" />
            <circle cx="12" cy="10" r="6" fill="#3e5068" />
            <path d="M1 22q4-6 11-6t11 6q-3 6-11 6T1 22z" fill="#3e5068" />
          </svg>
        </div>
      </div>

      {/* ribbon */}
      <div className="h-[85px] shrink-0 bg-[#f0f0f0] flex pb-[3px]">
        <div className="ml-[10px] mt-[10px] w-[110px] h-[61px] border-2 border-[#dedede] rounded-[4px] flex items-center justify-center gap-[5px] text-[11px] text-[#444] font-bold tracking-[-0.2px]">
          DESIGN
          <Caret />
        </div>
        <div className="ml-[13px] flex flex-col border-b-2 border-[#dcdcdc] -mr-[1000px] w-[2427px]">
          <div className="flex pl-[4px]">
            <TabLabel w="w-[56px]" active>SOLID</TabLabel>
            <TabLabel w="w-[114px]">SURFACE</TabLabel>
            <TabLabel w="w-[52px]">MESH</TabLabel>
            <TabLabel w="w-[134px]">SHEET METAL</TabLabel>
            <TabLabel w="w-[68px]">PLASTIC</TabLabel>
            <TabLabel w="w-[110px]">UTILITIES</TabLabel>
            <TabLabel w="w-[66px]">MANAGE</TabLabel>
          </div>
          <div className="flex mt-[3px]">
            <Group w="w-[260px] pr-[6px]" label="CREATE" labelClass="-ml-[5px]">
              <SketchIcon /><ExtrudeIcon /><RevolveIcon /><HoleIcon /><NodesIcon /><FormIcon />
            </Group>
            <Group w="w-[94px] pl-[2px]" label="AUTOMATE"><AutomateIcon /></Group>
            <Group w="w-[268px] pl-[3px]" label="MODIFY">
              <PressPull /><FilletIcon /><ChamferIcon /><CombineIcon /><OffsetIcon /><MoveIcon />
            </Group>
            <Group w="w-[141px] pl-[3px]" label="ASSEMBLE"><NewComp /><JointIcon /><BomIcon /></Group>
            <Group w="w-[98px] pl-[1px]" label="CONFIGURE"><ConfigCube /><ConfigTable /></Group>
            <Group w="w-[99px] pl-[2px]" label="CONSTRUCT"><ConstructIcon /></Group>
            <Group w="w-[79px] pl-[2px]" label="INSPECT"><InspectIcon /></Group>
            <Group w="w-[140px] pl-[5px]" label="INSERT"><DeriveIcon /><BoltIcon /><ImageIcon /></Group>
            <div className="w-[76px] flex flex-col items-center">
              <div className="h-[34px] flex items-center -mt-[1px]"><SelectIcon /></div>
              <div className="flex items-center gap-[4px] mt-[7px] text-[10px] leading-3 tracking-[-0.3px] text-[#555]">
                SELECT
                <Caret />
              </div>
            </div>
          </div>
        </div>
      </div>

      {/* canvas */}
      <div className="relative flex-1 min-h-0 flex flex-col justify-between py-[4px] pb-[5px]">
        <Model />
        <NavCube />
        <div className="relative">
          <PanelHead title="BROWSER" back />
          <div className="mt-[4px]">
            <div className="flex items-center h-[24px] pl-[20px]">
              <svg viewBox="0 0 11 11" className="size-[11px] shrink-0"><path d="M11 0v11H0z" fill="#777" stroke="#333" strokeWidth="0.8" /></svg>
              <div className="ml-[8px] w-[208px] h-[20px] bg-[#f2f2f2] flex items-center pl-[3px]">
                <Eye />
                <div className="ml-[6px] w-[158px] h-[16px] bg-[#8c8c8c] flex items-center text-[11px] font-bold tracking-[0.1px] text-white">
                  <svg viewBox="0 0 16 16" className="ml-[4px] size-[15px] shrink-0"><path d="M1 5l3-4h11v10l-3 4H3q-2 0-2-2z" fill="#f4f4f4" stroke="#444" /><path d="M1 5h11v10M12 5l3-4" fill="none" stroke="#444" /></svg>
                  <span className="ml-[14px]">Foam Plate 1 - Top v1</span>
                </div>
                <svg viewBox="0 0 14 14" className="ml-[3px] size-[14px]"><circle cx="7" cy="7" r="6" fill="#fff" stroke="#444" /><circle cx="7" cy="7" r="2.500" fill="#333" /></svg>
              </div>
            </div>
            <TreeRow w="w-[130px]"><Gear className="size-[13px]" /><span className="ml-[13px] whitespace-nowrap">Document Settings</span></TreeRow>
            <TreeRow w="w-[110px]"><Folder /><span className="ml-[14px]">Named Views</span></TreeRow>
            <TreeRow w="w-[95px]"><Eye off /><span className="ml-[9px]"><Folder /></span><span className="ml-[14px]">Origin</span></TreeRow>
            <TreeRow w="w-[103px]"><Eye /><span className="ml-[9px]"><Folder /></span><span className="ml-[14px]">Bodies</span></TreeRow>
            <TreeRow w="w-[115px]"><Eye /><span className="ml-[9px]"><Folder /></span><span className="ml-[14px]">Sketches</span></TreeRow>
            <TreeRow w="w-[131px]"><Eye /><span className="ml-[9px]"><Folder /></span><span className="ml-[14px]">Construction</span></TreeRow>
          </div>
        </div>
        <NavBar />
        <div className="relative flex items-end">
          <PanelHead title="COMMENTS" plus />
          <svg viewBox="0 0 16 16" className="absolute right-[13px] bottom-[3px] size-[17px]">
            <path d="M8 0a8 8 0 0 1 8 8v8H8A8 8 0 0 1 8 0z" fill="#111" />
            <path d="M4 9l3-3 1 2 3-3M5 11l3-3 1 2 3-3" fill="none" stroke="#ccc" strokeWidth="0.8" />
          </svg>
        </div>
      </div>

      <Timeline />
      <Taskbar />
      <div className="absolute right-0 top-[23px] h-[300px] w-[1px] bg-[#666]" />
    </div>
  );
}
